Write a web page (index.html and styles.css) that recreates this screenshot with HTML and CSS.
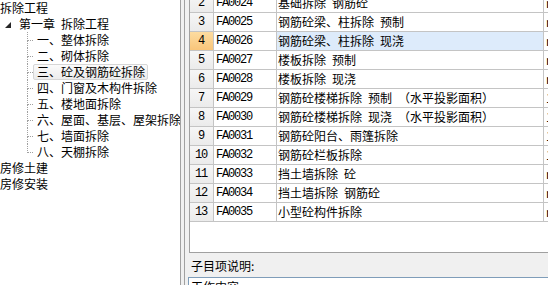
FILE: index.html
```html
<!DOCTYPE html>
<html lang="zh-CN">
<head>
<meta charset="utf-8">
<title>拆除工程</title>
<link rel="stylesheet" href="styles.css">
</head>
<body>
<div class="app">
  <div class="tree">
    <div class="node root"><span class="lbl">拆除工程</span></div>
    <div class="node chap">
      <span class="exp"><svg width="6" height="6" viewBox="0 0 6 6"><polygon points="6,0 6,6 0,6" fill="#262626"/></svg></span>
      <span class="lbl">第一章 拆除工程</span>
    </div>
    <div class="kids">
      <div class="node"><span class="conn"><i class="t"></i><i class="b"></i></span><span class="lbl">一、整体拆除</span></div>
      <div class="node"><span class="conn"><i class="t"></i><i class="b"></i></span><span class="lbl">二、砌体拆除</span></div>
      <div class="node hot"><span class="conn"><i class="t"></i><i class="b"></i></span><span class="lbl">三、砼及钢筋砼拆除</span></div>
      <div class="node"><span class="conn"><i class="t"></i><i class="b"></i></span><span class="lbl">四、门窗及木构件拆除</span></div>
      <div class="node"><span class="conn"><i class="t"></i><i class="b"></i></span><span class="lbl">五、楼地面拆除</span></div>
      <div class="node"><span class="conn"><i class="t"></i><i class="b"></i></span><span class="lbl">六、屋面、基层、屋架拆除</span></div>
      <div class="node"><span class="conn"><i class="t"></i><i class="b"></i></span><span class="lbl">七、墙面拆除</span></div>
      <div class="node last"><span class="conn"><i class="t"></i><i class="b"></i></span><span class="lbl">八、天棚拆除</span></div>
    </div>
    <div class="node root"><span class="lbl">房修土建</span></div>
    <div class="node root"><span class="lbl">房修安装</span></div>
  </div>
  <div class="split"></div>
  <div class="right">
    <div class="grid">
      <div class="rows">
        <div class="row"><span class="rh">2</span><span class="code">FA0024</span><span class="name">基础拆除 钢筋砼</span><span class="unit">m3</span></div>
        <div class="row"><span class="rh">3</span><span class="code">FA0025</span><span class="name">钢筋砼梁、柱拆除 预制</span><span class="unit">m3</span></div>
        <div class="row"><span class="rh sel">4</span><span class="code">FA0026</span><span class="name focus">钢筋砼梁、柱拆除 现浇</span><span class="unit">m3</span></div>
        <div class="row"><span class="rh">5</span><span class="code">FA0027</span><span class="name">楼板拆除 预制</span><span class="unit">m3</span></div>
        <div class="row"><span class="rh">6</span><span class="code">FA0028</span><span class="name">楼板拆除 现浇</span><span class="unit">m3</span></div>
        <div class="row"><span class="rh">7</span><span class="code">FA0029</span><span class="name">钢筋砼楼梯拆除 预制 （水平投影面积）</span><span class="unit">10m2</span></div>
        <div class="row"><span class="rh">8</span><span class="code">FA0030</span><span class="name">钢筋砼楼梯拆除 现浇 （水平投影面积）</span><span class="unit">10m2</span></div>
        <div class="row"><span class="rh">9</span><span class="code">FA0031</span><span class="name">钢筋砼阳台、雨篷拆除</span><span class="unit">10m2</span></div>
        <div class="row"><span class="rh">10</span><span class="code">FA0032</span><span class="name">钢筋砼栏板拆除</span><span class="unit">10m</span></div>
        <div class="row"><span class="rh">11</span><span class="code">FA0033</span><span class="name">挡土墙拆除 砼</span><span class="unit">m3</span></div>
        <div class="row"><span class="rh">12</span><span class="code">FA0034</span><span class="name">挡土墙拆除 钢筋砼</span><span class="unit">m3</span></div>
        <div class="row"><span class="rh">13</span><span class="code">FA0035</span><span class="name">小型砼构件拆除</span><span class="unit">m3</span></div>
      </div>
    </div>
    <div class="label">子目项说明:</div>
    <div class="memo">工作内容:</div>
  </div>
</div>
</body>
</html>
```
FILE: styles.css
```css
html, body {
  margin: 0;
  padding: 0;
}
body {
  width: 548px;
  height: 285px;
  overflow: hidden;
  background: #fff;
  color: #000;
  font-family: "Noto Sans CJK SC", sans-serif;
  font-size: 12px;
}
.app {
  display: flex;
  height: 285px;
}

/* tree */
.tree {
  width: 180px;
  flex: none;
  overflow: hidden;
  white-space: nowrap;
  background: #fff;
}
.node {
  display: flex;
  height: 16px;
}
.lbl {
  display: block;
  border: 1px solid transparent;
  border-radius: 2px;
  padding: 0 2px 0 3px;
  line-height: 14px;
  word-spacing: 3.3px;
}
.root .lbl {
  border: 0;
  padding: 0;
  line-height: 16px;
}
.exp {
  width: 15px;
  flex: none;
  display: flex;
  padding: 6px 0 0 5px;
  box-sizing: border-box;
}
.exp svg {
  display: block;
}
.kids {
  padding-left: 27px;
}
.conn {
  width: 6px;
  flex: none;
  display: flex;
  flex-direction: column;
}
.conn i {
  display: block;
  box-sizing: border-box;
}
.conn .t {
  height: 9px;
  border-left: 1px dotted #a0a0a0;
  border-bottom: 1px dotted #a0a0a0;
}
.conn .b {
  flex: 1;
  border-left: 1px dotted #a0a0a0;
}
.last .conn .b {
  border-left-color: transparent;
}
.hot .lbl {
  border-color: #d6d6d6;
  background: linear-gradient(#fbfbfb, #ececec);
}

/* splitter */
.split {
  width: 5px;
  flex: none;
  box-sizing: border-box;
  border-left: 1px solid #a0a0a0;
  border-right: 1px solid #a0a0a0;
  background: #f0f0f0;
}

/* right pane */
.right {
  flex: 1;
  min-width: 0;
  display: flex;
  flex-direction: column;
  background: #f0f0f0;
}
.grid {
  margin-left: 4px;
  height: 253px;
  flex: none;
  box-sizing: border-box;
  border-left: 1px solid #a0a0a0;
  border-bottom: 1px solid #a0a0a0;
  background: #fff;
  overflow: hidden;
}
.rows {
  margin-top: -6px;
}
.row {
  display: flex;
  height: 19px;
}
.row > span {
  flex: none;
  box-sizing: border-box;
  height: 19px;
  border-right: 1px solid #c4c4c4;
  border-bottom: 1px solid #c4c4c4;
  line-height: 18px;
  white-space: nowrap;
  overflow: hidden;
}
.rh {
  width: 24px;
  text-align: center;
  background: linear-gradient(#f6f6f6, #ebebeb);
  font-family: "Liberation Mono", monospace;
  letter-spacing: -1.2px;
  text-indent: -1px;
}
.rh.sel {
  background: linear-gradient(#fddca0, #f8c57a);
}
.code {
  width: 63px;
  padding-left: 2px;
  font-family: "Liberation Mono", monospace;
  letter-spacing: -1.2px;
}
.name {
  width: 267px;
  padding-left: 1px;
  word-spacing: 3.3px;
}
.name.focus {
  background: #ddebfb;
}
.unit {
  width: 60px;
  padding-left: 2px;
}
.label {
  height: 24px;
  flex: none;
  box-sizing: border-box;
  padding: 3px 0 0 6px;
  line-height: 20px;
}
.memo {
  flex: 1;
  margin-left: 3px;
  border-top: 1px solid #7f9db9;
  border-left: 1px solid #7f9db9;
  background: #fff;
  padding: 2px 0 0 2px;
  line-height: 14px;
}
```
